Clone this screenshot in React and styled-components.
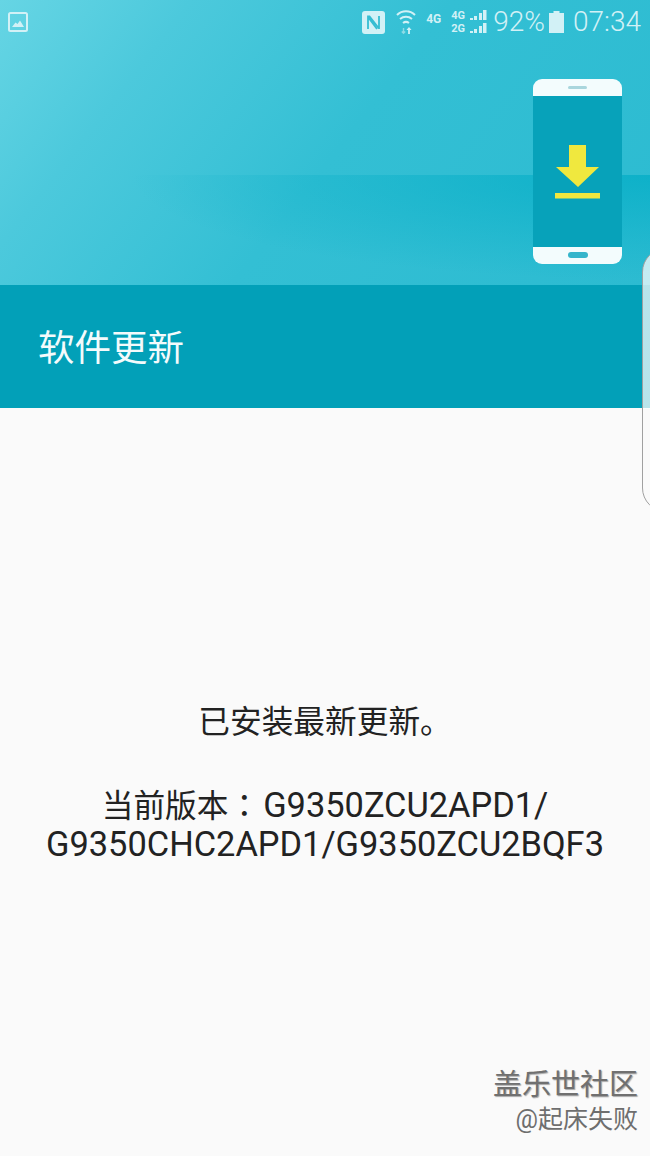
import React from 'react'
import styled, { createGlobalStyle } from 'styled-components'

const Global = createGlobalStyle`
html, body { margin: 0; padding: 0; background: #fafafa; }
body { font-family: Roboto, "Noto Sans CJK SC", sans-serif; }
`

const Screen = styled.div`
position: relative;
width: 650px;
height: 1156px;
overflow: hidden;
background: #fafafa;
display: flex;
flex-direction: column;
`

const Hero = styled.div`
height: 285px;
flex: none;
display: flex;
flex-direction: column;
background:
  radial-gradient(ellipse 520px 105px at 100% 0, rgba(0,172,197,0.7), rgba(0,172,197,0) 100%) 0 175px / 100% 110px no-repeat,
  linear-gradient(128deg, #66d5e4 0%, #4cc9dc 22%, #33bfd4 52%, #2cbbd1 100%);
`

const StatusBar = styled.div`
height: 44px;
flex: none;
display: flex;
align-items: center;
justify-content: flex-end;
position: relative;
padding-right: 9px;
color: #d2f1f6;
`

const StatusText = styled.span`
font-size: 28px;
line-height: 44px;
font-weight: 300;
margin-left: ${p => p.$gap || 0}px;
`

const Net = styled.span`
font-size: 12px;
font-weight: 700;
line-height: 14px;
margin-left: 10px;
margin-bottom: 6px;
`

const NetStack = styled.div`
display: grid;
grid-template-columns: 19px 17px;
align-items: end;
margin-left: 10px;
font-size: 11px;
font-weight: 700;
line-height: 13px;
`

const ImageGlyph = styled.svg`
position: absolute;
left: 8px;
top: 12px;
`

const NfcGlyph = styled.svg`
display: block;
`

const WifiGlyph = styled.svg`
display: block;
margin-left: 11px;
`

const SignalGlyph = styled.svg`
display: block;
margin-bottom: 2px;
`

const BatteryGlyph = styled.svg`
display: block;
margin-left: 4px;
`

const HeroBody = styled.div`
flex: 1;
display: flex;
justify-content: flex-end;
padding: 35px 28px 0 0;
`

const TitleBar = styled.div`
height: 123px;
flex: none;
box-sizing: border-box;
background: #02a0b8;
display: flex;
align-items: center;
padding: 6px 0 0 38px;
`

const Title = styled.h1`
margin: 0;
color: #f4fbfc;
font-size: 36.5px;
font-weight: 400;
line-height: 1;
`

const Body = styled.div`
flex: 1;
display: flex;
flex-direction: column;
align-items: center;
padding-top: 293px;
color: #222;
text-align: center;
`

const Line = styled.div`
font-size: 34.4px;
line-height: 41px;
height: 41px;
white-space: nowrap;
margin-top: ${p => p.$top || 0}px;
`

const Cjk = styled.span`
font-size: 31.7px;
`

const Colon = styled.span`
font-size: 31.7px;
letter-spacing: 3px;
font-family: "Noto Sans CJK TC", sans-serif;
`

const EdgeHandle = styled.div`
position: absolute;
left: 642px;
top: 248px;
width: 30px;
height: 264px;
box-sizing: border-box;
border: 1px solid #a0a0a0;
border-radius: 24px 0 0 24px;
background: linear-gradient(to bottom, rgba(255,255,255,0.72) 0 160px, #fafafa 160px);
`

const Watermark = styled.div`
position: absolute;
right: 12px;
bottom: 18px;
display: flex;
flex-direction: column;
align-items: flex-end;
`

const MarkName = styled.div`
font-size: 29px;
line-height: 34px;
color: #707070;
text-shadow: 1px 1px 1px #a8a8a8;
`

const MarkUser = styled.div`
font-size: 25px;
line-height: 36px;
color: #6e6e6e;
`

const Ink = '#d2f1f6'

const ImageIcon = () => (
  <ImageGlyph width="20" height="20" viewBox="0 0 20 20">
    <rect x="1" y="1" width="18" height="18" rx="1.5" fill="none" stroke={Ink} strokeWidth="2" />
    <path d="M4 15l3.500-4.500 2 1.500 2.500-3.500 4 6.500z" fill={Ink} />
  </ImageGlyph>
)

const NfcIcon = () => (
  <NfcGlyph width="23" height="23" viewBox="0 0 23 23">
    <rect width="23" height="23" rx="3" fill={Ink} />
    <path d="M6 18V5.500h1.500L17 17.500M17 5v13M6 6l9 12" fill="none" stroke="#35bdd2" strokeWidth="1.800" />
  </NfcGlyph>
)

const WifiIcon = () => (
  <WifiGlyph width="20" height="26" viewBox="0 0 20 26">
    <g fill="none" stroke={Ink} strokeWidth="2">
      <path d="M1 6c5-5 13-5 18 0" />
      <path d="M4 10c3.500-3 8.500-3 12 0" />
      <path d="M7 14c2-1.500 4-1.500 6 0" />
    </g>
    <path d="M7.500 19v5M5.800 22.500l1.700 1.700 1.700-1.700" stroke="#8fdbe6" strokeWidth="1.400" fill="none" />
    <path d="M13 25v-6" stroke={Ink} strokeWidth="1.800" />
    <path d="M10.500 21l2.500-3 2.500 3z" fill={Ink} />
  </WifiGlyph>
)

const SignalIcon = () => (
  <SignalGlyph width="17" height="10" viewBox="0 0 17 10">
    <rect x="0" y="8" width="3" height="2" fill={Ink} />
    <rect x="4" y="6" width="3" height="4" fill={Ink} />
    <rect x="9" y="3" width="3" height="7" fill={Ink} />
    <rect x="13" y="0" width="3.500" height="10" fill={Ink} />
  </SignalGlyph>
)

const BatteryIcon = () => (
  <BatteryGlyph width="15" height="22" viewBox="0 0 15 22">
    <path d="M4.500 0h6v2h4.500v20H0V2h4.500z" fill={Ink} />
  </BatteryGlyph>
)

const PhoneIcon = () => (
  <svg width="89" height="185" viewBox="0 0 89 185">
    <rect width="89" height="185" rx="9" fill="#f3fcfd" />
    <rect y="17" width="89" height="151" fill="#07a2ba" />
    <rect x="35" y="7" width="19" height="3" rx="1.500" fill="#a9d6dd" />
    <rect x="35" y="173" width="20" height="6" rx="3" fill="#35b5cb" />
    <path d="M36 66h17v22h13L45 108 23 88h13z" fill="#f0e83e" />
    <rect x="22" y="114" width="45" height="5.500" fill="#f0e83e" />
  </svg>
)

function App() {
  return (
    <Screen>
      <Global />
      <Hero>
        <StatusBar>
          <ImageIcon />
          <NfcIcon />
          <WifiIcon />
          <Net>4G</Net>
          <NetStack>
            <span>4G</span><SignalIcon />
            <span>2G</span><SignalIcon />
          </NetStack>
          <StatusText $gap={6}>92%</StatusText>
          <BatteryIcon />
          <StatusText $gap={9}>07:34</StatusText>
        </StatusBar>
        <HeroBody>
          <PhoneIcon />
        </HeroBody>
      </Hero>
      <TitleBar>
        <Title>软件更新</Title>
      </TitleBar>
      <Body>
        <Line><Cjk>已安装最新更新。</Cjk></Line>
        <Line $top={41}><Cjk>当前版本</Cjk><Colon>：</Colon>G9350ZCU2APD1/</Line>
        <Line>G9350CHC2APD1/G9350ZCU2BQF3</Line>
      </Body>
      <EdgeHandle />
      <Watermark>
        <MarkName>盖乐世社区</MarkName>
        <MarkUser>@起床失败</MarkUser>
      </Watermark>
    </Screen>
  )
}

export default App
